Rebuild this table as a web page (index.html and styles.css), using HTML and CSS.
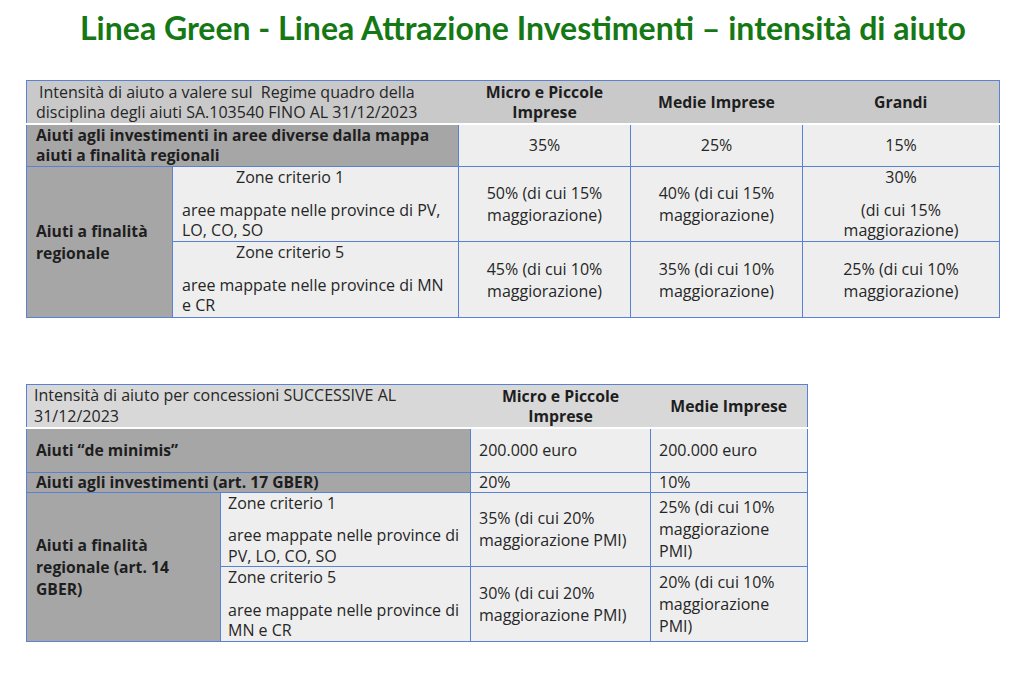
FILE: index.html
```html
<!DOCTYPE html>
<html lang="it">
<head>
<meta charset="utf-8">
<title>Linea Green - intensità di aiuto</title>
<link rel="stylesheet" href="styles.css">
</head>
<body>
<h1 class="title">Linea Green - Linea Attrazione Investimenti – intensità di aiuto</h1>

<table class="grid t1">
  <colgroup>
    <col class="c1a"><col class="c1b"><col class="c1c"><col class="c1d"><col class="c1e">
  </colgroup>
  <tr class="hdr">
    <td colspan="2" class="hdr-left"><div class="indent">Intensità di aiuto a valere sul &nbsp;Regime quadro della</div>disciplina degli aiuti SA.103540 FINO AL 31/12/2023</td>
    <th>Micro e Piccole<br>Imprese</th>
    <th>Medie Imprese</th>
    <th>Grandi</th>
  </tr>
  <tr class="r2">
    <td colspan="2" class="dark b">Aiuti agli investimenti in aree diverse dalla mappa aiuti a finalità regionali</td>
    <td class="val center">35%</td>
    <td class="val center">25%</td>
    <td class="val center">15%</td>
  </tr>
  <tr class="r3">
    <td rowspan="2" class="dark b mid">Aiuti a finalità<br>regionale</td>
    <td class="val zone"><p class="zt">Zone criterio 1</p><p class="zd">aree mappate nelle province di PV, LO, CO, SO</p></td>
    <td class="val center">50% (di cui 15%<br>maggiorazione)</td>
    <td class="val center">40% (di cui 15%<br>maggiorazione)</td>
    <td class="val center top"><p class="zt0">30%</p><p class="zd0">(di cui 15%<br>maggiorazione)</p></td>
  </tr>
  <tr class="r4">
    <td class="val zone"><p class="zt">Zone criterio 5</p><p class="zd">aree mappate nelle province di MN e CR</p></td>
    <td class="val center">45% (di cui 10%<br>maggiorazione)</td>
    <td class="val center">35% (di cui 10%<br>maggiorazione)</td>
    <td class="val center">25% (di cui 10%<br>maggiorazione)</td>
  </tr>
</table>

<table class="grid t2">
  <colgroup>
    <col class="c2a"><col class="c2b"><col class="c2c"><col class="c2d">
  </colgroup>
  <tr class="hdr2">
    <td colspan="2" class="hdr-left2">Intensità di aiuto per concessioni SUCCESSIVE AL<br>31/12/2023</td>
    <th>Micro e Piccole<br>Imprese</th>
    <th>Medie Imprese</th>
  </tr>
  <tr class="s2">
    <td colspan="2" class="dark b">Aiuti “de minimis”</td>
    <td class="val">200.000 euro</td>
    <td class="val">200.000 euro</td>
  </tr>
  <tr class="s3">
    <td colspan="2" class="dark b">Aiuti agli investimenti (art. 17 GBER)</td>
    <td class="val">20%</td>
    <td class="val">10%</td>
  </tr>
  <tr class="s4">
    <td rowspan="2" class="dark b mid">Aiuti a finalità<br>regionale (art. 14<br>GBER)</td>
    <td class="val zone2"><p class="zt2">Zone criterio 1</p><p class="zd2">aree mappate nelle province di PV, LO, CO, SO</p></td>
    <td class="val">35% (di cui 20%<br>maggiorazione PMI)</td>
    <td class="val">25% (di cui 10%<br>maggiorazione<br>PMI)</td>
  </tr>
  <tr class="s5">
    <td class="val zone2"><p class="zt2">Zone criterio 5</p><p class="zd2">aree mappate nelle province di MN e CR</p></td>
    <td class="val">30% (di cui 20%<br>maggiorazione PMI)</td>
    <td class="val">20% (di cui 10%<br>maggiorazione<br>PMI)</td>
  </tr>
</table>
</body>
</html>
```

FILE: styles.css
```css
html, body {
  margin: 0;
  padding: 0;
  background: #ffffff;
}
body {
  font-family: "Open Sans", "Noto Sans", "DejaVu Sans", sans-serif;
  color: #262626;
  font-size: 16px;
}
.title {
  margin: 0;
  padding: 10px 0 0 80px;
  height: 70px;
  box-sizing: border-box;
  font-family: Lato, "Open Sans", sans-serif;
  font-size: 32px;
  font-weight: 700;
  color: #157815;
  line-height: 36px;
  white-space: nowrap;
}
.grid {
  border-collapse: collapse;
  table-layout: fixed;
  margin-left: 26px;
}
.grid td, .grid th {
  border: 1px solid #5a82d2;
  padding: 0;
  line-height: 22px;
  vertical-align: middle;
}
.t1 {
  margin-top: 10px;
  width: 973px;
}
.c1a { width: 146px; }
.c1b { width: 286px; }
.c1c { width: 172px; }
.c1d { width: 172px; }
.c1e { width: 197px; }

.hdr td, .hdr th, .hdr2 td, .hdr2 th {
  background: #c9c9c9;
  border-left: none;
  border-right: none;
  border-bottom: 2px solid #ffffff;
}
.hdr td:first-child, .hdr2 td:first-child { border-left: 1px solid #5a82d2; }
.hdr th:last-child, .hdr2 th:last-child { border-right: 1px solid #5a82d2; }
.hdr { height: 43px; }
.hdr-left {
  padding: 1px 0 0 9px !important;
  line-height: 20px !important;
}
.indent { text-indent: 3px; }
.grid th {
  font-weight: 700;
  font-size: 15.8px;
  line-height: 20px;
  text-align: center;
  color: #1e1e1e;
}
.dark {
  background: #a6a6a6;
  color: #1e1e1e;
}
.b {
  font-weight: 700;
  font-size: 15.7px;
  padding-left: 9px !important;
}
.val {
  background: #eeeeee;
}
.center { text-align: center; }
.top { vertical-align: top !important; }
.r2 { height: 43px; }
.r2 td { line-height: 20px; }
.r3 { height: 75px; }
.r4 { height: 76px; }
.zone {
  vertical-align: top !important;
  padding: 0 8px 0 9px !important;
  line-height: 20.5px !important;
}
.top { line-height: 20.5px !important; }
.zone p, .zone2 p, .top p { margin: 0; }
.zt { padding-left: 54px; }
.zd { margin-top: 12px !important; }
.zd0 { margin-top: 12px !important; }

.t2 {
  margin-top: 66px;
  width: 781px;
}
.c2a { width: 194px; }
.c2b { width: 250px; }
.c2c { width: 180px; }
.c2d { width: 157px; }
.hdr2 { height: 42px; }
.hdr2 td, .hdr2 th { background: #d8d8d8; }
.hdr-left2 {
  padding: 0 0 0 7px !important;
  line-height: 21px !important;
}
.s2 { height: 44px; }
.s3 { height: 20px; }
.s3 td { line-height: 18px; }
.s4 { height: 74px; }
.s5 { height: 75px; }
.t2 .val { padding-left: 8px; padding-right: 4px; }
.zone2 {
  vertical-align: top !important;
  padding: 0 4px 0 7px !important;
  line-height: 20.5px !important;
}
.zd2 { margin-top: 12px !important; }
```
